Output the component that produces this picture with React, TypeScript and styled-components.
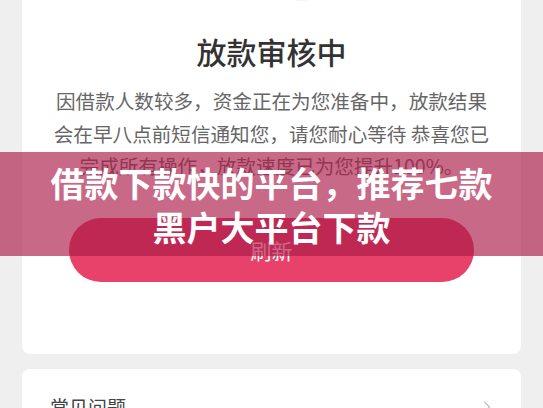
import React from 'react';
import styled, { createGlobalStyle } from 'styled-components';
import { ChevronRight } from 'lucide-react';

const GlobalStyle = createGlobalStyle`
  body {
    margin: 0;
    background: #efefef;
    font-family: "Noto Sans CJK SC", "Noto Sans", sans-serif;
  }
`;

const Page = styled.div`
  position: relative;
  height: 408px;
  overflow: hidden;
  padding: 0 22px;
  box-sizing: border-box;
`;

const Card = styled.section<{ top?: boolean }>`
  background: #fff;
  border-radius: 8px;
  margin-top: ${props => (props.top ? '-52px' : '15px')};
  padding: ${props => (props.top ? '0 28px 72px' : '24px 24px 24px 28px')};
  display: flex;
  flex-direction: column;
  align-items: ${props => (props.top ? 'center' : 'stretch')};
`;

const StatusIcon = styled.div`
  width: 54px;
  height: 53px;
  border-radius: 50%;
  background: #f8f5e0;
  margin-left: 58px;
`;

const Title = styled.h1`
  margin: 30px 0 0;
  font-size: 30px;
  line-height: 40px;
  font-weight: 500;
  color: #333;
`;

const Message = styled.p`
  margin: 14px 0 0;
  font-size: 19.6px;
  line-height: 32.5px;
  color: #666;
  text-align: center;
`;

const RefreshButton = styled.button`
  margin-top: 35px;
  width: 405px;
  height: 64px;
  border: none;
  border-radius: 32px;
  background: #e8416a;
  color: #fff;
  font-family: inherit;
  font-size: 21px;
`;

const Row = styled.div`
  display: flex;
  align-items: center;
  justify-content: space-between;
  height: 28px;
  color: #444;
  font-size: 19px;
`;

const Banner = styled.div`
  position: absolute;
  top: 152px;
  left: 0;
  right: 0;
  height: 104px;
  background: rgba(172, 28, 73, 0.66);
  display: flex;
  align-items: center;
  justify-content: center;
  text-align: center;
  color: #fff;
  font-size: 34px;
  line-height: 44px;
  font-weight: 700;
  padding-top: 2px;
  box-sizing: border-box;
`;

export default function App(): JSX.Element {
  return (
    <>
      <GlobalStyle />
      <Page>
        <Card top>
          <StatusIcon />
          <Title>放款审核中</Title>
          <Message>
            因借款人数较多，资金正在为您准备中，放款结果
            <br />
            会在早八点前短信通知您，请您耐心等待 恭喜您已
            <br />
            完成所有操作，放款速度已为您提升100%。
          </Message>
          <RefreshButton type="button">刷新</RefreshButton>
        </Card>
        <Card>
          <Row>
            <span>常见问题</span>
            <ChevronRight size={20} color="#c2c2c2" strokeWidth={1.6} />
          </Row>
        </Card>
        <Banner>
          借款下款快的平台，推荐七款
          <br />
          黑户大平台下款
        </Banner>
      </Page>
    </>
  );
}
